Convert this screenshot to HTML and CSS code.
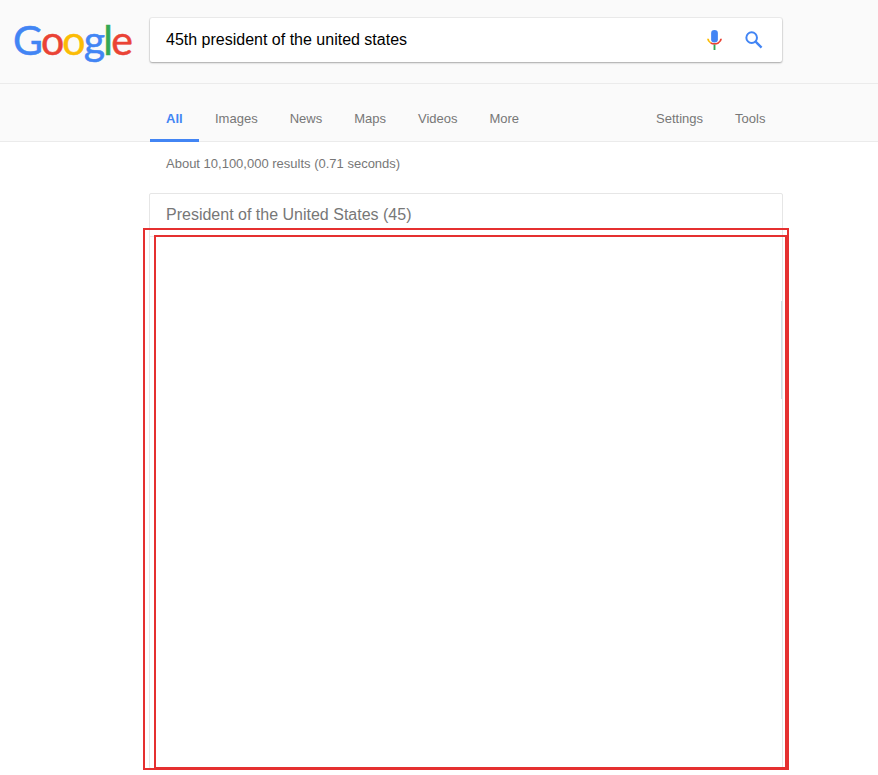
FILE: index.html
```html
<!DOCTYPE html>
<html lang="en">
<head>
<meta charset="utf-8">
<title>45th president of the united states - Google Search</title>
<link rel="stylesheet" href="styles.css">
</head>
<body>
<header class="top">
  <div class="logo" aria-label="Google"><span class="b">G</span><span class="r">o</span><span class="y">o</span><span class="b">g</span><span class="g">l</span><span class="r">e</span></div>
  <div class="search">
    <span class="query">45th president of the united states</span>
    <svg class="mic" width="15" height="20" viewBox="0 0 16 24" preserveAspectRatio="none" aria-hidden="true">
      <rect x="4.4" y="0" width="7.2" height="15" rx="3.6" fill="#4285f4"/>
      <path d="M1 10.5a7 6.6 0 0 0 3 5" fill="none" stroke="#fbbc05" stroke-width="2"/>
      <path d="M4 15.5a7.4 7 0 0 0 8 0 7 6.6 0 0 0 3-5" fill="none" stroke="#ea4335" stroke-width="2"/>
      <rect x="7" y="17.5" width="2" height="6.5" fill="#34a853"/>
    </svg>
    <svg class="lens" width="18" height="18" viewBox="0 0 20 20" aria-hidden="true">
      <circle cx="7.4" cy="7.4" r="5.9" fill="none" stroke="#4285f4" stroke-width="2.2"/>
      <path d="M11.8 11.8l6.6 6.6" stroke="#4285f4" stroke-width="2.6" fill="none"/>
    </svg>
  </div>
</header>
<nav class="tabs">
  <a class="tab active">All</a>
  <a class="tab">Images</a>
  <a class="tab">News</a>
  <a class="tab">Maps</a>
  <a class="tab">Videos</a>
  <a class="tab">More</a>
  <a class="tab push">Settings</a>
  <a class="tab">Tools</a>
</nav>
<main class="content">
  <p class="stats">About 10,100,000 results (0.71 seconds)</p>
  <section class="card">
    <h2 class="card-title">President of the United States (45)</h2>
    <div class="card-body"></div>
  </section>
</main>
<div class="mark mark-outer"></div>
<div class="mark mark-inner"></div>
</body>
</html>
```

FILE: styles.css
```css
* { box-sizing: border-box; }
body {
  margin: 0;
  height: 775px;
  overflow: hidden;
  position: relative;
  background: #fff;
  font-family: "Liberation Sans", Arial, sans-serif;
}
.top {
  height: 84px;
  background: #fafafa;
  border-bottom: 1px solid #ebebeb;
  display: flex;
  align-items: flex-start;
  padding: 18px 0 0 13px;
}
.logo {
  width: 137px;
  height: 44px;
  font-family: Lato, sans-serif;
  font-size: 41px;
  line-height: 44px;
  letter-spacing: -1.8px;
  -webkit-text-stroke: 0.5px;
  white-space: nowrap;
}
.b { color: #4285f4; }
.r { color: #ea4335; }
.y { color: #fbbc05; }
.g { color: #34a853; }
.search {
  width: 632px;
  height: 44px;
  background: #fff;
  border-radius: 2px;
  box-shadow: 0 1px 2px rgba(0,0,0,.3), 0 0 0 1px rgba(0,0,0,.05);
  display: flex;
  align-items: center;
  padding: 0 19px 0 16px;
}
.query {
  flex: 1;
  font-size: 16px;
  color: #000;
}
.mic { margin-right: 23px; }
.tabs {
  height: 58px;
  background: #fafafa;
  border-bottom: 1px solid #ebebeb;
  display: flex;
  padding: 0 16px 0 150px;
}
.tab {
  height: 58px;
  padding: 0 16px;
  font-size: 13px;
  line-height: 69px;
  color: #777;
}
.tab.active {
  color: #4285f4;
  font-weight: bold;
  border-bottom: 3px solid #4285f4;
  width: 49px;
}
.tab.push { margin-left: 105px; }
.content { padding: 0 95px 0 149px; }
.stats {
  margin: 0;
  padding: 14px 0 0 17px;
  font-size: 13px;
  line-height: 16px;
  color: #777;
}
.card {
  margin-top: 21px;
  width: 634px;
  height: 576px;
  background: #fff;
  border: 1px solid #e6e6e6;
  border-radius: 2px;
}
.card-title {
  margin: 0;
  height: 43px;
  border-bottom: 1px solid #ebebeb;
  padding: 11px 0 0 16px;
  font-size: 16px;
  font-weight: normal;
  line-height: 20px;
  color: #777;
}
.card-body {
  height: 98px;
  border-right: 1px solid #cfe0e6;
  margin-top: 64px;
}
.mark {
  position: absolute;
  border: 2px solid #e53030;
}
.mark-outer { left: 143px; top: 228px; width: 646px; height: 542px; }
.mark-inner { left: 154px; top: 235px; width: 633px; height: 534px; }
```
